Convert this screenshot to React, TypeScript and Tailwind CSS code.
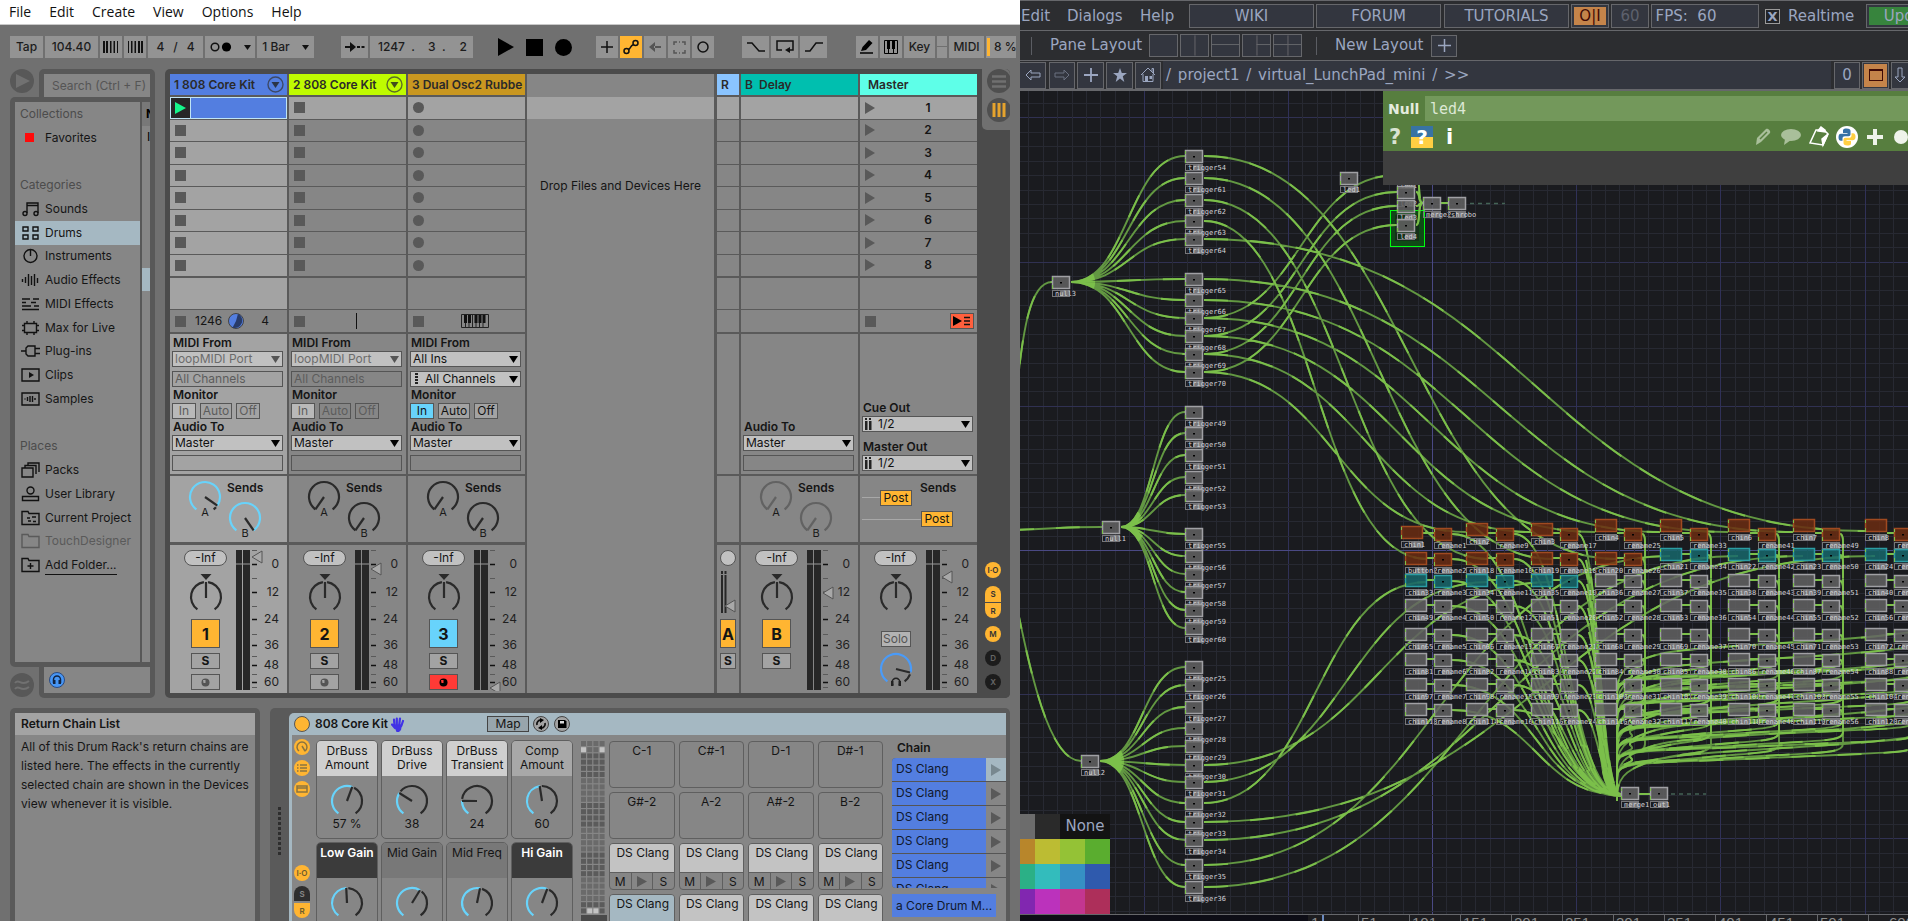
import React from "react";
import type { ReactNode } from "react";

/* ------------------------------------------------------------------ */
/* Shared drawing helpers                                              */
/* ------------------------------------------------------------------ */

const polar = (cx: number, cy: number, r: number, deg: number) => {
  const a = (deg * Math.PI) / 180;
  return [cx + r * Math.sin(a), cy - r * Math.cos(a)];
};

const arc = (cx: number, cy: number, r: number, from: number, to: number) => {
  const [x1, y1] = polar(cx, cy, r, from);
  const [x2, y2] = polar(cx, cy, r, to);
  return `M${x1} ${y1}A${r} ${r} 0 ${to - from > 180 ? 1 : 0} 1 ${x2} ${y2}`;
};

type KnobProps = {
  value: number;
  letter?: string;
  track?: string;
  fill?: string;
  needle?: string;
};

function Knob({ value, letter, track = "#2a2a2a", fill = "#68d3fb", needle = "#2a2a2a" }: KnobProps) {
  const angle = -145 + value * 290;
  const [nx, ny] = polar(18, 18, 15, angle);
  return (
    <svg width="36" height="40" viewBox="0 0 36 40" className="shrink-0">
      {value < 1 && <path d={arc(18, 18, 15, angle + (value > 0 ? 8 : 0), 145)} fill="none" stroke={track} strokeWidth="2.200" />}
      {value > 0 && <path d={arc(18, 18, 15, -145, angle)} fill="none" stroke={fill} strokeWidth="2.200" />}
      <path d={`M18 18L${nx} ${ny}`} stroke={needle} strokeWidth="2.200" />
      {letter && (
        <text x="18" y="37" textAnchor="middle" fontSize="11" fill="#1a1a1a">
          {letter}
        </text>
      )}
    </svg>
  );
}

function PanKnob() {
  return (
    <svg width="36" height="42" viewBox="0 0 36 42">
      <path d="M12.500 2h11l-5.500 6z" fill="#2a2a2a" />
      <path d={arc(18, 25, 15, -145, -8)} fill="none" stroke="#2a2a2a" strokeWidth="2.200" />
      <path d={arc(18, 25, 15, 8, 145)} fill="none" stroke="#2a2a2a" strokeWidth="2.200" />
      <path d="M18 10V26" stroke="#2a2a2a" strokeWidth="2.200" />
    </svg>
  );
}

/* ------------------------------------------------------------------ */
/* Live: menu and transport                                            */
/* ------------------------------------------------------------------ */

const toolBtn =
  "flex h-[22px] shrink-0 items-center justify-center whitespace-nowrap text-[12px] font-medium text-[#1c1c1c]";

function Tool({ label, className, children, on }: { label?: string; className: string; children: ReactNode; on?: boolean }) {
  return (
    <button type="button" aria-label={label} className={`${toolBtn} ${on ? "bg-[#ffb532]" : "bg-[#939393]"} ${className}`}>
      {children}
    </button>
  );
}

function Bars({ flip }: { flip?: boolean }) {
  return (
    <svg width="16" height="12" viewBox="0 0 16 12" className={flip ? "rotate-180" : ""}>
      <path d="M0 0h2v12H0zM3 0h2v12H3zM7 0h1.500v12H7zM10.500 0h1.500v12h-1.500zM14 0h1v12h-1z" fill="#111" />
    </svg>
  );
}

function Keys() {
  return (
    <svg width="14" height="14" viewBox="0 0 14 14">
      <path d="M.5.5h13v13H.5z" fill="#939393" stroke="#000" />
      <path d="M3 1h3v8H3zM8 1h3v8H8z" fill="#000" />
      <path d="M4.500 9v5M9.500 9v5" stroke="#000" />
    </svg>
  );
}

function MenuBar() {
  return (
    <nav className="flex h-[25px] shrink-0 items-center gap-[18px] border-b border-[#c9c9c9] bg-white pl-[9px] font-['Open_Sans',sans-serif] text-[14px] leading-[24px] text-[#111]">
      {["File", "Edit", "Create", "View", "Options", "Help"].map((m) => (
        <button key={m} type="button">
          {m}
        </button>
      ))}
    </nav>
  );
}

function Transport() {
  return (
    <div className="flex h-[44px] shrink-0 items-start overflow-hidden pt-[11px] pl-[10px]">
      <Tool className="w-[33px]">Tap</Tool>
      <Tool className="ml-[2px] w-[53px]">104.40</Tool>
      <Tool label="Nudge down" className="ml-[2px] w-[22px]">
        <Bars />
      </Tool>
      <Tool label="Nudge up" className="ml-[2px] w-[22px]">
        <Bars flip />
      </Tool>
      <Tool className="ml-[2px] w-[55px] gap-[9px]">
        <span>4</span>
        <span>/</span>
        <span>4</span>
      </Tool>
      <Tool label="Metronome" className="ml-[2px] w-[50px] gap-[12px]">
        <svg width="22" height="12" viewBox="0 0 22 12">
          <circle cx="5" cy="6" r="3.800" fill="none" stroke="#111" strokeWidth="1.500" />
          <circle cx="16.500" cy="6" r="4.600" fill="#000" />
        </svg>
        <svg width="7" height="5" viewBox="0 0 7 5">
          <path d="M0 0h7L3.500 5z" fill="#111" />
        </svg>
      </Tool>
      <Tool label="Quantization" className="ml-[2px] w-[57px] gap-[12px]">
        1 Bar
        <svg width="7" height="5" viewBox="0 0 7 5">
          <path d="M0 0h7L3.500 5z" fill="#111" />
        </svg>
      </Tool>
      <Tool label="Follow" className="ml-[27px] w-[27px]">
        <svg width="20" height="10" viewBox="0 0 20 10">
          <path d="M0 5h7" stroke="#111" strokeWidth="2" />
          <path d="M5 0l6 5-6 5z" fill="#111" />
          <path d="M12 5h3M16.500 5h3" stroke="#111" strokeWidth="2" />
        </svg>
      </Tool>
      <Tool className="ml-[2px] w-[103px] pr-[6px] pl-[8px]">
        <span className="flex-1 text-left whitespace-pre">1247  .</span>
        <span className="pr-[14px] whitespace-pre">3  .</span>
        <span>2</span>
      </Tool>
      <div className="ml-[24px] flex h-[22px] shrink-0 items-center gap-[12px]">
        <button type="button" aria-label="Play">
          <svg width="17" height="18" viewBox="0 0 17 18">
            <path d="M1 0l16 9-16 9z" />
          </svg>
        </button>
        <button type="button" aria-label="Stop" className="size-[17px] bg-black" />
        <button type="button" aria-label="Record" className="size-[17px] rounded-full bg-black" />
      </div>
      <Tool label="Overdub" className="ml-[24px] w-[22px]">
        <svg width="12" height="12" viewBox="0 0 12 12">
          <path d="M6 0v12M0 6h12" stroke="#111" strokeWidth="1.500" />
        </svg>
      </Tool>
      <Tool label="Automation arm" on className="ml-[2px] w-[22px]">
        <svg width="16" height="16" viewBox="0 0 16 16" fill="none" stroke="#111" strokeWidth="1.500">
          <circle cx="3.500" cy="12" r="2.500" />
          <circle cx="12.500" cy="4" r="2.500" />
          <path d="M5.500 10.500C8 9 7 7 10.500 5.500" />
        </svg>
      </Tool>
      <Tool label="Re-enable automation" className="ml-[2px] w-[22px]">
        <svg width="12" height="10" viewBox="0 0 12 10">
          <path d="M6 0L0 5l6 5zM5 4h7v2H5z" fill="#555" />
        </svg>
      </Tool>
      <Tool label="Capture" className="ml-[2px] w-[22px]">
        <svg width="13" height="13" viewBox="0 0 13 13" fill="none" stroke="#555" strokeWidth="1.500">
          <path d="M1 4V1h3M9 1h3v3M12 9v3H9M4 12H1V9M6 1h1M6 12h1" />
        </svg>
      </Tool>
      <Tool label="Session record" className="ml-[2px] w-[22px]">
        <svg width="12" height="12" viewBox="0 0 12 12">
          <circle cx="6" cy="6" r="5" fill="none" stroke="#111" strokeWidth="1.500" />
        </svg>
      </Tool>
      <Tool label="Punch in" className="ml-[28px] w-[27px]">
        <svg width="18" height="10" viewBox="0 0 18 10" fill="none" stroke="#111" strokeWidth="1.500">
          <path d="M0 1h5l7 8h6" />
        </svg>
      </Tool>
      <Tool label="Loop" className="ml-[2px] w-[27px]">
        <svg width="18" height="14" viewBox="0 0 18 14" fill="none" stroke="#111" strokeWidth="1.500">
          <path d="M6 10H1V1h16v9h-5" />
          <path d="M14 7l-5 3 5 3z" fill="#111" stroke="none" />
        </svg>
      </Tool>
      <Tool label="Punch out" className="ml-[2px] w-[27px]">
        <svg width="18" height="10" viewBox="0 0 18 10" fill="none" stroke="#111" strokeWidth="1.500">
          <path d="M0 9h5l6-8h7" />
        </svg>
      </Tool>
      <Tool label="Draw mode" className="ml-[29px] w-[22px]">
        <svg width="14" height="14" viewBox="0 0 14 14">
          <path d="M1 11l1.500-4L9 0l3.500 3L6 10z" fill="#000" />
          <path d="M0 13h13" stroke="#000" strokeWidth="1.500" />
        </svg>
      </Tool>
      <Tool label="Computer keyboard" className="ml-[2px] w-[22px]">
        <Keys />
      </Tool>
      <Tool className="ml-[2px] w-[31px]">Key</Tool>
      <div className="ml-[2px] flex w-[10px] shrink-0 flex-col gap-px">
        <span className="h-[10px] bg-[#939393]" />
        <span className="h-[11px] bg-[#939393]" />
      </div>
      <Tool className="ml-[2px] w-[35px]">MIDI</Tool>
      <div className="mr-[4px] ml-[2px] flex h-[22px] min-w-0 flex-1 items-center gap-[4px] overflow-hidden bg-[#939393] pl-px text-[12px] font-medium whitespace-nowrap text-[#1c1c1c]">
        <span className="h-[18px] w-[3px] shrink-0 bg-[#ffb532]" />8 %
      </div>
    </div>
  );
}

/* ------------------------------------------------------------------ */
/* Live: browser                                                       */
/* ------------------------------------------------------------------ */

const sideIcons: Record<string, ReactNode> = {
  Sounds: (
    <>
      <path d="M6 12V2h11v10M6 4.500h11" />
      <circle cx="4" cy="12.500" r="2" />
      <circle cx="15" cy="12.500" r="2" />
    </>
  ),
  Drums: <path d="M2 2h5v4H2zM12 2h5v4h-5zM2 10h5v4H2zM12 10h5v4h-5z" />,
  Instruments: (
    <>
      <circle cx="9.500" cy="8" r="6.500" />
      <path d="M9.500 2v6" />
    </>
  ),
  "Audio Effects": <path d="M1.500 7v3M4.500 5v6M7.500 2v12M10.500 4v9M13.500 2v12M16.500 6v5" />,
  "MIDI Effects": <path d="M1 3h8M12 3h6M1 6.500h4M10 6.500h5M1 10h9M13 10h5M1 13.500h17" />,
  "Max for Live": <path d="M3.500 3.500h12v9h-12zM6 1v2M13 1v2M6 13v2M13 13v2M1 5.500h2M16 5.500h2M1 10.500h2M16 10.500h2" />,
  "Plug-ins": <path d="M0 8h5M7 3h7v10H7L5 11V5zM14 5.500h5M14 10.500h5" />,
  Clips: (
    <>
      <path d="M1 2h17v12H1z" />
      <path d="M8 5l5 3-5 3z" fill="#111" stroke="none" />
    </>
  ),
  Samples: <path d="M1 2h17v12H1zM4 7.500v1M6.500 6v4M9 5v6M11.500 5v6M14 7v2" />,
  Packs: <path d="M1 6h11v9H1zM4 6V3.500h11V12M7 3.500V1h11v9" />,
  "User Library": (
    <>
      <circle cx="9.500" cy="4.500" r="3.500" />
      <path d="M1.500 10.500h16v4h-16z" />
    </>
  ),
  "Current Project": <path d="M1 14.500v-13h6l1 2h10v11zM6 8h3M11 7h4M7 11h3M12 11.500h3" />,
  TouchDesigner: <path d="M1 14.500v-13h6l1 2h10v11z" stroke="#5a5a5a" />,
  "Add Folder...": <path d="M1 14.500v-13h6l1 2h10v11zM9.500 6v6M6.500 9h6" />,
};

function SideHeading({ children }: { children: ReactNode }) {
  return <div className="flex items-center pl-[5px] text-[#4c4c4c]">{children}</div>;
}

function SideItem({ name, selected, muted, underline }: { name: string; selected?: boolean; muted?: boolean; underline?: boolean }) {
  return (
    <button
      type="button"
      className={`flex items-center gap-[5px] pl-[6px] text-left whitespace-nowrap ${selected ? "bg-[#a5b8c2]" : ""} ${muted ? "text-[#5a5a5a]" : "text-[#151515]"}`}
    >
      <svg width="19" height="16" viewBox="0 0 19 16" fill="none" stroke="#111" strokeWidth="1.400" className="shrink-0">
        {sideIcons[name]}
      </svg>
      <span className={underline ? "border-b border-[#111]" : ""}>{name}</span>
    </button>
  );
}

function Browser() {
  return (
    <aside className="flex w-[145px] shrink-0 flex-col text-[12px]">
      <div className="flex h-[28px] shrink-0">
        <button type="button" aria-label="Preview" className="size-[24px] shrink-0 rounded-full bg-[#585858]">
          <svg width="24" height="24" viewBox="0 0 24 24">
            <path d="M6 5l14 7-14 7z" fill="#717171" />
          </svg>
        </button>
        <div className="ml-[5px] flex flex-1 rounded-t-[5px] bg-[#585858] pt-[5px] pr-[5px] pl-[5px]">
          <input
            aria-label="Search"
            placeholder="Search (Ctrl + F)"
            className="h-full w-full bg-[#868686] pl-[8px] text-[12px] outline-none placeholder:text-[#555]"
          />
        </div>
      </div>
      <div className="flex min-h-0 flex-1 gap-[2px] rounded-tl-[5px] rounded-bl-[5px] bg-[#585858] py-[5px] pr-[5px] pl-[5px]">
        <div className="w-[125px] shrink-0 bg-[#868686]">
          <div className="grid h-[475px] grid-rows-[repeat(20,1fr)]">
            <SideHeading>Collections</SideHeading>
            <button type="button" className="flex items-center gap-[11px] pl-[10px] text-[#151515]">
              <span className="size-[9px] bg-[#ff0a0a]" />
              Favorites
            </button>
            <span />
            <SideHeading>Categories</SideHeading>
            <SideItem name="Sounds" />
            <SideItem name="Drums" selected />
            <SideItem name="Instruments" />
            <SideItem name="Audio Effects" />
            <SideItem name="MIDI Effects" />
            <SideItem name="Max for Live" />
            <SideItem name="Plug-ins" />
            <SideItem name="Clips" />
            <SideItem name="Samples" />
            <span />
            <SideHeading>Places</SideHeading>
            <SideItem name="Packs" />
            <SideItem name="User Library" />
            <SideItem name="Current Project" />
            <SideItem name="TouchDesigner" muted />
            <SideItem name="Add Folder..." underline />
          </div>
        </div>
        <div className="flex flex-1 flex-col overflow-hidden bg-[#868686]">
          <div className="h-[24px] bg-[#787878] pl-[4px] leading-[24px] font-bold">N</div>
          <div className="h-[20px] pl-[5px] leading-[22px]">I</div>
          <div className="mt-[122px] h-[23px] bg-[#a5b8c2]" />
        </div>
      </div>
      <div className="flex h-[31px] shrink-0 items-start">
        <svg width="24" height="24" viewBox="0 0 24 24" className="mt-[6px] shrink-0">
          <circle cx="12" cy="12" r="12" fill="#585858" />
          <path d="M5 10c4-5 6 4 14-2M5 16c4-5 6 4 14-2" fill="none" stroke="#717171" strokeWidth="2" />
        </svg>
        <div className="ml-[5px] h-full flex-1 rounded-b-[5px] bg-[#585858] px-[5px] pb-[5px]">
          <div className="flex h-full items-center bg-[#868686] pl-[5px]">
            <svg width="16" height="16" viewBox="0 0 16 16">
              <circle cx="8" cy="8" r="7.500" fill="#4796f5" stroke="#2a4a80" />
              <path d="M4.500 11V7.500a3.500 3.500 0 017 0V11" fill="none" stroke="#12233f" strokeWidth="1.500" />
              <path d="M4 8h2.500v4H4zM9.500 8H12v4H9.500z" fill="#12233f" />
            </svg>
          </div>
        </div>
      </div>
    </aside>
  );
}

/* ------------------------------------------------------------------ */
/* Live: session and mixer                                             */
/* ------------------------------------------------------------------ */

const cellBg = (lit?: boolean) => (lit ? "bg-[#a3a3a3]" : "bg-[#868686]");

function Dropdown({ label, value, icon, disabled }: { label: string; value: string; icon?: ReactNode; disabled?: boolean }) {
  return (
    <div className="relative flex h-[16px] items-center border border-[#555] bg-[#c1c1c1]">
      {icon}
      <select
        aria-label={label}
        disabled={disabled}
        className={`h-full w-full appearance-none bg-transparent pl-[2px] text-[12px] leading-[14px] outline-none ${disabled ? "text-[#6c6c6c] opacity-100" : "text-[#111]"}`}
      >
        <option>{value}</option>
      </select>
      <svg width="9" height="7" viewBox="0 0 9 7" className="pointer-events-none absolute right-[2px]">
        <path d="M0 0h9L4.500 7z" fill={disabled ? "#555" : "#000"} />
      </svg>
    </div>
  );
}

function SlotBox({ text }: { text?: string }) {
  return <div className="h-[16px] border border-[#555] pl-[2px] leading-[14px] text-[#5c5c5c]">{text}</div>;
}

const ioLabel = "h-[16px] pl-px text-[12px] leading-[16px] font-semibold text-[#151515]";

function Monitor({ active }: { active?: boolean }) {
  const base = `h-[16px] border border-[#555] leading-[14px] ${active ? "text-[#111]" : "text-[#5c5c5c]"}`;
  return (
    <div className="flex gap-[4px]">
      <button type="button" className={`${base} w-[24px] ${active ? "bg-[#68d3fb]" : "bg-[#b9b9b9]"}`}>
        In
      </button>
      <button type="button" className={`${base} w-[32px] ${active ? "bg-[#a3a3a3]" : ""}`}>
        Auto
      </button>
      <button type="button" className={`${base} w-[24px] ${active ? "bg-[#a3a3a3]" : ""}`}>
        Off
      </button>
    </div>
  );
}

const DottedIcon = (
  <svg width="5" height="12" viewBox="0 0 5 12" className="ml-[3px] mr-[4px] shrink-0">
    <path d="M1 0h3v2H1zM1 3h3v2H1zM1 6h3v2H1zM1 9h3v2H1z" fill="#222" />
  </svg>
);

const StereoIcon = (
  <svg width="8" height="12" viewBox="0 0 8 12" className="ml-[2px] mr-[3px] shrink-0">
    <path d="M0 0h2v2H0zM4 0h2v2H4zM0 3h2.500v9H0zM4 3h2.500v9H4z" fill="#222" />
  </svg>
);

const scale: [number, string][] = [
  [19, "0"],
  [47, "12"],
  [74, "24"],
  [100, "36"],
  [120, "48"],
  [137, "60"],
];

function Meter({ fader }: { fader: number }) {
  return (
    <svg width="46" height="146" viewBox="0 0 46 146" className="shrink-0">
      <path d="M0 5h6v140H0zM7 5h7v140H7z" fill="#272727" />
      <path d="M0 19h14" stroke="#9a9a9a" />
      {scale.map(([y, label]) => (
        <g key={label}>
          <path d={`M16 ${y + 0.5}h5`} stroke="#111" strokeWidth="1.500" />
          <text x="43" y={y + 4} textAnchor="end" fontSize="12" fill="#1f1f1f">
            {label}
          </text>
        </g>
      ))}
      {[5, 33, 61, 89, 111, 129, 142].map((y) => (
        <path key={y} d={`M16 ${y + 0.5}h5`} stroke="#5a5a5a" />
      ))}
      <path d={`M16 ${fader}l10-6v12z`} fill="#a8a8a8" stroke="#555" />
    </svg>
  );
}

type StripProps = {
  lit?: boolean;
  name: string;
  color: string;
  fader: number;
  recording?: boolean;
  record?: boolean;
};

function Strip({ lit, name, color, fader, record, recording }: StripProps) {
  return (
    <div className={`flex h-[148px] overflow-hidden ${cellBg(lit)}`}>
      <div className="flex w-[66px] shrink-0 flex-col items-center pt-[5px] pl-[5px]">
        <div className="h-[16px] w-[43px] rounded-full border border-[#555] bg-[#c1c1c1] text-center leading-[14px]">-Inf</div>
        <div className="mt-[6px] h-[42px]">
          <PanKnob />
        </div>
        <button type="button" className={`mt-[5px] h-[29px] w-[29px] border border-[#555] text-[16px] leading-[26px] font-bold ${color}`}>
          {name}
        </button>
        <button type="button" className="mt-[5px] h-[16px] w-[29px] border border-[#555] bg-[#a3a3a3] leading-[14px] font-bold">
          S
        </button>
        {record && (
          <button
            type="button"
            aria-label={`Arm track ${name}`}
            className={`mt-[5px] flex h-[16px] w-[29px] items-center justify-center border border-[#555] ${recording ? "bg-[#ff3a36]" : "bg-[#a3a3a3]"}`}
          >
            <svg width="9" height="9" viewBox="0 0 9 9">
              <circle cx="4.500" cy="4.500" r="4" fill={recording ? "#000" : "#555"} />
              <path d="M2 2h2.500v3L2.500 5z" fill={recording ? "#ff3a36" : "#a3a3a3"} />
            </svg>
          </button>
        )}
      </div>
      <Meter fader={fader} />
    </div>
  );
}

function Sends({ lit, values = [0, 0], dim }: { lit?: boolean; values?: [number, number]; dim?: boolean }) {
  const stroke = dim ? "#626262" : "#2a2a2a";
  return (
    <div className={`flex h-[66px] gap-[4px] pl-[17px] ${cellBg(lit)}`}>
      <div className="pt-[3px]">
        <Knob value={values[0]} letter="A" track={stroke} needle={lit ? "#2a2a2a" : stroke} />
      </div>
      <div>
        <div className="h-[24px] pt-[4px] leading-[16px] font-semibold">Sends</div>
        <Knob value={values[1]} letter="B" track={stroke} needle={lit ? "#2a2a2a" : stroke} />
      </div>
    </div>
  );
}

function SlotRows({ kind, lit, playing }: { kind: "square" | "circle" | "none" | "scene"; lit?: boolean; playing?: boolean }) {
  return (
    <div className="grid h-[179px] shrink-0 grid-rows-[repeat(8,1fr)] gap-px">
      {Array.from({ length: 8 }, (_, i) => {
        if (playing && i === 0) {
          return (
            <div key={i} className="flex border border-[#bfe4f5] bg-[#537ee0]">
              <button type="button" aria-label="Launch clip" className="flex w-[20px] items-center justify-center border-r border-[#bfe4f5] bg-[#272727]">
                <svg width="11" height="12" viewBox="0 0 11 12">
                  <path d="M0 0l11 6-11 6z" fill="#16f78c" />
                </svg>
              </button>
            </div>
          );
        }
        return (
          <div key={i} className={`flex items-center pl-[5px] ${cellBg(lit || i === 0)}`}>
            {kind === "square" && <span className="size-[11px] bg-[#595959]" />}
            {kind === "circle" && <span className="size-[11px] rounded-full bg-[#595959]" />}
            {kind === "scene" && (
              <>
                <svg width="10" height="12" viewBox="0 0 10 12">
                  <path d="M0 0l10 6-10 6z" fill="#595959" />
                </svg>
                <span className="flex-1 pl-[4px] text-center text-[12px] font-semibold">{i + 1}</span>
              </>
            )}
          </div>
        );
      })}
    </div>
  );
}

type ColumnProps = {
  head: ReactNode;
  headColor: string;
  lit?: boolean;
  width: string;
  slots: "square" | "circle" | "none" | "scene";
  playing?: boolean;
  status?: ReactNode;
  io?: ReactNode;
  sends: ReactNode;
  strip: ReactNode;
};

function Column({ head, headColor, lit, width, slots, playing, status, io, sends, strip }: ColumnProps) {
  return (
    <section className={`flex shrink-0 flex-col ${width}`}>
      <div className={`flex h-[21px] shrink-0 items-center overflow-hidden pl-[4px] font-semibold whitespace-nowrap text-[#2a2a2a] ${headColor}`}>{head}</div>
      <div className="mt-[2px]">
        <SlotRows kind={slots} lit={lit} playing={playing} />
      </div>
      <div className={`mt-[2px] h-[31px] ${cellBg(lit)}`} />
      <div className="mt-px flex h-[22px] items-center bg-[#868686] pl-[5px]">{status}</div>
      <div className={`mt-[2px] h-[140px] px-[2px] pt-px ${cellBg(lit)}`}>{io}</div>
      <div className="mt-[2px]">{sends}</div>
      <div className="mt-[3px]">{strip}</div>
    </section>
  );
}

function TrackIO({ active }: { active?: boolean }) {
  return (
    <div className="flex flex-col pr-[2px]">
      <div className={ioLabel}>MIDI From</div>
      <Dropdown label="MIDI From" value={active ? "All Ins" : "loopMIDI Port"} disabled={!active} />
      <div className="mt-[4px]">
        {active ? <Dropdown label="MIDI Channel" value="All Channels" icon={DottedIcon} /> : <SlotBox text="All Channels" />}
      </div>
      <div className={ioLabel}>Monitor</div>
      <Monitor active={active} />
      <div className={ioLabel}>Audio To</div>
      <Dropdown label="Audio To" value="Master" />
      <div className="mt-[4px]">
        <SlotBox />
      </div>
    </div>
  );
}

function FoldIcon() {
  return (
    <svg width="17" height="17" viewBox="0 0 17 17" className="mr-[3px] ml-auto">
      <circle cx="8.500" cy="8.500" r="7.500" fill="none" stroke="#333" strokeOpacity=".7" strokeWidth="1.400" />
      <path d="M4.500 6h8l-4 6z" fill="#222" fillOpacity=".8" />
    </svg>
  );
}

const StatusSquare = <span className="size-[11px] shrink-0 bg-[#595959]" />;

function ReturnA() {
  return (
    <div className="flex h-[148px] flex-col items-center bg-[#868686] pt-[5px]">
      <div className="h-[16px] w-[16px] rounded-full border border-[#555] bg-[#c1c1c1]" />
      <svg width="16" height="42" viewBox="0 0 16 42" className="mt-[5px]">
        <path d="M1 0h2v3H1zM4.500 0h2v3h-2zM1 4h2v38H1zM4.500 4h2v38h-2z" fill="#272727" />
        <path d="M5 35l10-6v12z" fill="#a8a8a8" stroke="#555" />
      </svg>
      <button type="button" className="mt-[6px] h-[29px] w-[16px] border border-[#555] bg-[#ffb532] text-[16px] leading-[26px] font-bold">
        A
      </button>
      <button type="button" className="mt-[5px] h-[16px] w-[16px] border border-[#555] bg-[#a3a3a3] leading-[14px] font-bold">
        S
      </button>
    </div>
  );
}

function MasterStrip() {
  return (
    <div className="flex h-[148px] overflow-hidden bg-[#868686]">
      <div className="flex w-[66px] shrink-0 flex-col items-center pt-[5px] pl-[5px]">
        <div className="h-[16px] w-[43px] rounded-full border border-[#555] bg-[#c1c1c1] text-center leading-[14px]">-Inf</div>
        <div className="mt-[6px] h-[42px]">
          <PanKnob />
        </div>
        <button type="button" className="mt-[17px] h-[16px] w-[30px] border border-[#555] bg-[#b3b3b3] leading-[14px] text-[#555]">
          Solo
        </button>
        <svg width="36" height="40" viewBox="0 0 36 40" className="mt-[3px]">
          <path d={arc(18, 19, 15, 111, 145)} fill="none" stroke="#2a2a2a" strokeWidth="2.200" />
          <path d={arc(18, 19, 15, -145, 103)} fill="none" stroke="#4a9bf8" strokeWidth="2.200" />
          <path d="M18 19l14 3.500" stroke="#2a2a2a" strokeWidth="2.200" />
          <path d="M15 35a4 4 0 116 0" fill="none" stroke="#222" strokeWidth="1.500" />
          <path d="M13 31h2.500v5H13zM20.500 31H23v5h-2.500z" fill="#222" />
        </svg>
      </div>
      <Meter fader={32} />
    </div>
  );
}

function ViewToggle({ children, className }: { children: ReactNode; className: string }) {
  return (
    <button type="button" className={`flex w-[16px] items-center justify-center text-[8px] font-semibold ${className}`}>
      {children}
    </button>
  );
}

function Session() {
  return (
    <main className="ml-[10px] flex min-w-0 flex-1 overflow-hidden rounded-[5px] bg-[#4b4b4b] pl-[5px] text-[12px] text-[#151515]">
      <div className="my-[5px] flex min-w-0 flex-1 gap-[2px] bg-[#5a5a5a]">
        <Column
          head={
            <>
              1 808 Core Kit
              <FoldIcon />
            </>
          }
          headColor="bg-[#537ee0]"
          lit
          width="w-[117px]"
          slots="square"
          playing
          status={
            <>
              {StatusSquare}
              <span className="ml-[9px]">1246</span>
              <svg width="16" height="16" viewBox="0 0 16 16" className="ml-[6px]">
                <circle cx="8" cy="8" r="7.500" fill="#537ee0" stroke="#444" />
                <path d="M10 .8A7.500 7.500 0 014.500 14.700L8 8z" fill="#283b69" />
              </svg>
              <span className="ml-[17px]">4</span>
            </>
          }
          io={<TrackIO />}
          sends={<Sends lit values={[0.93, 1]} />}
          strip={<Strip lit name="1" color="bg-[#ffb532]" fader={12} record />}
        />
        <Column
          head={
            <>
              2 808 Core Kit
              <FoldIcon />
            </>
          }
          headColor="bg-[#bffb00]"
          width="w-[117px]"
          slots="square"
          status={
            <>
              {StatusSquare}
              <span className="ml-[51px] h-[16px] w-px bg-[#111]" />
            </>
          }
          io={<TrackIO />}
          sends={<Sends />}
          strip={<Strip name="2" color="bg-[#ffb532]" fader={24} record />}
        />
        <Column
          head="3 Dual Osc2 Rubbe"
          headColor="bg-[#c99720]"
          width="w-[117px]"
          slots="circle"
          status={
            <>
              {StatusSquare}
              <svg width="28" height="14" viewBox="0 0 28 14" className="ml-[37px]">
                <path d="M.5.5h27v13H.5z" fill="none" stroke="#222" />
                <path d="M4.500 9v4M8 9v4M11.500 1v12M15 9v4M18.500 9v4M22 9v4" stroke="#222" />
                <path d="M3 1h3v8H3zM7 1h3v8H7zM13.500 1h3v8h-3zM17.500 1h3v8h-3zM21.500 1h3v8h-3z" fill="#111" />
              </svg>
            </>
          }
          io={<TrackIO active />}
          sends={<Sends />}
          strip={<Strip name="3" color="bg-[#68d3fb]" fader={143} record recording />}
        />
        <section className="flex min-w-0 flex-1 flex-col bg-[#868686]">
          <div className="mt-[23px] h-[22px] bg-[#a3a3a3]" />
          <p className="mt-[58px] text-center whitespace-nowrap">Drop Files and Devices Here</p>
        </section>
        <div className="ml-px flex shrink-0 gap-[2px]">
          <Column head="R" headColor="bg-[#8ac4ff]" width="w-[22px]" slots="none" sends={<div className="h-[66px] bg-[#868686]" />} strip={<ReturnA />} />
          <Column
            head={<span className="whitespace-pre">B  Delay</span>}
            headColor="bg-[#00bfaf]"
            width="w-[117px]"
            slots="none"
            io={
              <div className="flex h-full flex-col justify-end pr-[2px] pb-[3px]">
                <div className={ioLabel}>Audio To</div>
                <Dropdown label="Audio To" value="Master" />
                <div className="mt-[4px]">
                  <SlotBox />
                </div>
              </div>
            }
            sends={<Sends dim />}
            strip={<Strip name="B" color="bg-[#ffb532]" fader={48} />}
          />
          <Column
            head={<span className="pl-[4px]">Master</span>}
            headColor="bg-[#5effe8]"
            width="w-[117px]"
            slots="scene"
            status={
              <>
                {StatusSquare}
                <button type="button" aria-label="Back to arrangement" className="mr-[3px] ml-auto flex h-[16px] w-[24px] items-center justify-center border border-[#555] bg-[#ff5f3d]">
                  <svg width="18" height="10" viewBox="0 0 18 10">
                    <path d="M0 0l9 5-9 5z" />
                    <path d="M11 1.500h6M11 5h6M11 8.500h6" stroke="#111" strokeWidth="1.500" />
                  </svg>
                </button>
              </>
            }
            io={
              <div className="flex h-full flex-col justify-end pr-[2px] pb-[3px]">
                <div className={ioLabel}>Cue Out</div>
                <Dropdown label="Cue Out" value="1/2" icon={StereoIcon} />
                <div className={`mt-[7px] ${ioLabel}`}>Master Out</div>
                <Dropdown label="Master Out" value="1/2" icon={StereoIcon} />
              </div>
            }
            sends={
              <div className="flex h-[66px] flex-col bg-[#868686] pt-[4px] pl-[2px]">
                <div className="flex items-start">
                  <span className="mt-[17px] h-px w-[18px] bg-[#a8a8a8]" />
                  <button type="button" className="mt-[10px] h-[16px] w-[32px] border border-[#555] bg-[#ffb532] leading-[14px]">
                    Post
                  </button>
                  <span className="ml-[8px] leading-[16px] font-semibold">Sends</span>
                </div>
                <div className="mt-[5px] flex items-center">
                  <span className="h-px w-[59px] bg-[#a8a8a8]" />
                  <button type="button" className="h-[16px] w-[32px] border border-[#555] bg-[#ffb532] leading-[14px]">
                    Post
                  </button>
                </div>
              </div>
            }
            strip={<MasterStrip />}
          />
        </div>
      </div>
      <div className="flex w-[33px] shrink-0 flex-col bg-[#4b4b4b]">
        <div className="ml-[5px] flex h-[61px] shrink-0 flex-col items-center gap-[5px] rounded-bl-[5px] bg-[#707070]">
          <button type="button" aria-label="Arrangement view" className="pl-[5px]">
            <svg width="24" height="24" viewBox="0 0 24 24">
              <circle cx="12" cy="12" r="12" fill="#4f4f4f" />
              <path d="M5 7.500h14M5 12.500h14M5 17.500h14" stroke="#707070" strokeWidth="2.500" />
            </svg>
          </button>
          <button type="button" aria-label="Session view" className="pl-[5px]">
            <svg width="24" height="24" viewBox="0 0 24 24">
              <circle cx="12" cy="12" r="12" fill="#4f4f4f" />
              <path d="M7 5v14M12 5v14M17 5v14" stroke="#e5a32d" strokeWidth="3" />
            </svg>
          </button>
        </div>
        <div className="mt-auto mb-[8px] flex flex-col items-start pl-[8px] text-[#333]">
          <ViewToggle className="h-[16px] rounded-full bg-[#ffb532]">I·O</ViewToggle>
          <ViewToggle className="mt-[8px] h-[16px] rounded-t-full bg-[#ffb532]">S</ViewToggle>
          <ViewToggle className="mt-px h-[15px] rounded-b-full bg-[#ffb532]">R</ViewToggle>
          <ViewToggle className="mt-[8px] h-[16px] rounded-full bg-[#ffb532]">M</ViewToggle>
          <ViewToggle className="mt-[8px] h-[16px] rounded-full bg-[#1c1c1c] text-[#666]">D</ViewToggle>
          <ViewToggle className="mt-[8px] h-[16px] rounded-full bg-[#1c1c1c] text-[#666]">X</ViewToggle>
        </div>
      </div>
    </main>
  );
}

/* ------------------------------------------------------------------ */
/* Live: info view and device rack                                     */
/* ------------------------------------------------------------------ */

type MacroProps = { title: string; value: number; text?: string; head: string };

function Macro({ title, value, text, head }: MacroProps) {
  return (
    <div className="flex h-[99px] w-[62px] flex-col items-center overflow-hidden rounded-[5px] border border-[#5f5f5f] bg-[#868686]">
      <div className={`h-[35px] w-full shrink-0 pt-[3px] text-center leading-[14px] ${head}`}>{title}</div>
      <div className="mt-[7px] h-[34px]">
        <Knob value={value} />
      </div>
      <span className="leading-[14px]">{text}</span>
    </div>
  );
}

function Pad({ label, filled, selected }: { label: string; filled?: boolean; selected?: boolean }) {
  return (
    <div className="flex h-[47px] min-w-0 flex-1 flex-col overflow-hidden rounded-[4px] border border-[#5f5f5f] bg-[#868686]">
      <div className={`flex-1 text-center leading-[17px] ${filled ? (selected ? "bg-[#a5b8c2] pl-[2px]" : "bg-[#c3c3c3] pl-[2px]") : ""}`}>{label}</div>
      {filled && (
        <div className="flex h-[17px] border-t border-[#5f5f5f]">
          <button type="button" className="flex-1">
            M
          </button>
          <button type="button" aria-label={`Preview ${label}`} className="flex flex-1 items-center justify-center border-x border-[#5f5f5f]">
            <svg width="10" height="11" viewBox="0 0 10 11">
              <path d="M0 0l10 5.500L0 11z" fill="#595959" />
            </svg>
          </button>
          <button type="button" className="flex-1">
            S
          </button>
        </div>
      )}
    </div>
  );
}

function ChainRow({ selected }: { selected?: boolean }) {
  return (
    <div className="flex h-[23px] shrink-0">
      <span className="flex-1 bg-[#537ee0] pl-[4px] leading-[22px] text-[#10182c]">DS Clang</span>
      <button type="button" aria-label="Preview chain" className={`flex w-[20px] items-center justify-center ${selected ? "bg-[#a5b8c2]" : "bg-[#868686]"}`}>
        <svg width="10" height="12" viewBox="0 0 10 12">
          <path d="M0 0l10 6-10 6z" fill={selected ? "#78888f" : "#595959"} />
        </svg>
      </button>
    </div>
  );
}

function PadOverview() {
  const cells: ReactNode[] = [];
  for (let r = 0; r < 28; r++) {
    for (let c = 0; c < 4; c++) {
      const bright = (r === 1 && (c === 0 || c === 3)) || (r === 27 && (c === 1 || c === 2));
      const block = Math.floor((r + 2) / 4) % 2 === 0;
      cells.push(<rect key={`${r}-${c}`} x={c * 6.2} y={r * 6.2} width="5" height="5" fill={bright ? "#c3c3c3" : block ? "#6a6a6a" : "#5b5b5b"} />);
    }
  }
  return (
    <svg width="26" height="182" viewBox="0 0 26 182" className="shrink-0">
      {cells}
      <path d="M-1 174h28v8H-1z" fill="#4a4a4a" />
    </svg>
  );
}

function InfoView() {
  return (
    <section className="w-[250px] shrink-0 rounded-t-[5px] bg-[#5a5a5a] px-[5px] pt-[5px]">
      <div className="flex h-full flex-col bg-[#868686] text-[12px] text-[#151515]">
        <h2 className="h-[22px] shrink-0 bg-[#a3a3a3] pl-[6px] leading-[22px] font-semibold">Return Chain List</h2>
        <p className="pt-[2px] pl-[6px] leading-[19px] whitespace-nowrap">
          All of this Drum Rack's return chains are
          <br />
          listed here. The effects in the currently
          <br />
          selected chain are shown in the Devices
          <br />
          view whenever it is visible.
        </p>
      </div>
    </section>
  );
}

function DeviceView() {
  return (
    <section className="ml-[10px] flex min-w-0 flex-1 rounded-t-[5px] bg-[#5a5a5a] pt-[5px] pr-[4px] text-[12px] text-[#151515]">
      <div className="flex w-[19px] shrink-0 flex-col items-center gap-[2px] pt-[94px]">
        {Array.from({ length: 10 }, (_, i) => (
          <span key={i} className="size-[3px] bg-[#2e2e2e]" />
        ))}
      </div>
      <div className="flex min-w-0 flex-1 flex-col overflow-hidden rounded-tl-[5px] bg-[#a5b8c2] pl-[3px]">
        <div className="flex h-[22px] shrink-0 items-center pl-[2px]">
          <button type="button" aria-label="Device activator" className="size-[16px] rounded-full border border-[#555] bg-[#ffb532]" />
          <h2 className="ml-[5px] font-semibold">808 Core Kit</h2>
          <svg width="14" height="15" viewBox="0 0 14 15" className="ml-[3px]">
            <path d="M3.500 9L3 2.500M5.800 8V1.500M8.200 8l.8-6.500M10.300 9l1.700-5M4 11L1 7.500" stroke="#4133e6" strokeWidth="2.200" strokeLinecap="round" />
            <path d="M2.500 7.500h8.500l-1 5.500-2 2H5.500z" fill="#4133e6" />
          </svg>
          <button type="button" className="ml-[82px] h-[16px] w-[42px] border border-[#444] bg-[#98a5ac] leading-[14px]">
            Map
          </button>
          <svg width="16" height="16" viewBox="0 0 16 16" className="ml-[4px]">
            <circle cx="8" cy="8" r="7.500" fill="#a3a3a3" stroke="#444" />
            <path d="M4 9a4 4 0 014-5M12 7a4 4 0 01-4 5" fill="none" stroke="#111" strokeWidth="1.800" />
            <path d="M7 2l4 2-4 3zM9 9v5l-4-2z" />
          </svg>
          <svg width="16" height="16" viewBox="0 0 16 16" className="ml-[5px]">
            <circle cx="8" cy="8" r="7.500" fill="#a3a3a3" stroke="#444" />
            <path d="M4 4h7l1.500 1.500V12H4z" />
            <path d="M6 5h4v2.500H6z" fill="#ddd" />
          </svg>
        </div>
        <div className="flex min-h-0 flex-1 bg-[#868686]">
          <div className="flex w-[22px] shrink-0 flex-col pt-[4px] pl-[2px]">
            <svg width="16" height="58" viewBox="0 0 16 58">
              <circle cx="8" cy="8" r="8" fill="#ffb532" />
              <circle cx="8" cy="29" r="8" fill="#ffb532" />
              <circle cx="8" cy="50" r="8" fill="#ffb532" />
              <g stroke="#8a7440" strokeWidth="1.500" fill="none">
                <path d="M5 12a5 5 0 116 0M8 7l3 5" />
                <path d="M3 26h1.500M6 26h7M3 29h1.500M6 29h7M3 32h1.500M6 32h7" />
                <path d="M3 47h10v6H3zM3 49h10" />
              </g>
            </svg>
            <ViewToggle className="mt-[68px] h-[16px] rounded-full bg-[#ffb532] text-[#6b5a2c]">I·O</ViewToggle>
            <ViewToggle className="mt-[5px] h-[15px] rounded-t-full bg-[#2e2e2e] text-[#888]">S</ViewToggle>
            <ViewToggle className="mt-[2px] h-[15px] rounded-b-full bg-[#ffb532] text-[#6b5a2c]">R</ViewToggle>
          </div>
          <div className="grid shrink-0 grid-cols-4 content-start gap-x-[3px] gap-y-[3px] pt-[5px] pl-[2px]">
            <Macro title="DrBuss Amount" value={0.57} text="57 %" head="bg-[#cfcfcf]" />
            <Macro title="DrBuss Drive" value={0.3} text="38" head="bg-[#cfcfcf]" />
            <Macro title="DrBuss Transient" value={0.19} text="24" head="bg-[#cfcfcf]" />
            <Macro title="Comp Amount" value={0.47} text="60" head="bg-[#a8a8a8]" />
            <Macro title="Low Gain" value={0.49} head="bg-[#3b3b3b] font-semibold text-white" />
            <Macro title="Mid Gain" value={0.61} head="bg-[#787878]" />
            <Macro title="Mid Freq" value={0.54} head="bg-[#787878]" />
            <Macro title="Hi Gain" value={0.57} head="bg-[#3b3b3b] font-semibold text-white" />
          </div>
          <div className="pt-[6px] pl-[8px]">
            <PadOverview />
          </div>
          <div className="ml-[2px] flex w-[274px] shrink-0 flex-col gap-[4px] pt-[6px]">
            {[
              ["C-1", "C#-1", "D-1", "D#-1"],
              ["G#-2", "A-2", "A#-2", "B-2"],
            ].map((row) => (
              <div key={row[0]} className="flex gap-[4px]">
                {row.map((p) => (
                  <Pad key={p} label={p} />
                ))}
              </div>
            ))}
            {[0, 1].map((r) => (
              <div key={r} className="flex gap-[4px]">
                {[0, 1, 2, 3].map((c) => (
                  <Pad key={c} label="DS Clang" filled selected={r === 1 && c === 0} />
                ))}
              </div>
            ))}
          </div>
          <div className="ml-[9px] flex min-w-0 flex-1 flex-col">
            <h3 className="h-[23px] shrink-0 pt-[5px] pl-[5px] leading-[16px] font-semibold">Chain</h3>
            <div className="flex h-[130px] shrink-0 flex-col gap-px overflow-hidden rounded-l-[4px] bg-[#555]">
              <ChainRow selected />
              <ChainRow />
              <ChainRow />
              <ChainRow />
              <ChainRow />
              <ChainRow />
            </div>
            <div className="mt-[6px] mr-[10px] h-[23px] shrink-0 bg-[#537ee0] pl-[4px] leading-[23px] whitespace-nowrap text-[#10182c]">a Core Drum M...</div>
          </div>
        </div>
      </div>
    </section>
  );
}

/* ------------------------------------------------------------------ */
/* TouchDesigner: bars                                                 */
/* ------------------------------------------------------------------ */

const tdBtn = "flex shrink-0 items-center justify-center border border-[#66676b] bg-[#33363f]";

function TdBars() {
  return (
    <>
      <div className="flex h-[31px] shrink-0 items-center overflow-hidden border-t border-b border-[#66676b] pt-px pl-px whitespace-nowrap">
        <button type="button" className="w-[46px] shrink-0 text-left">Edit</button>
        <button type="button" className="w-[73px] shrink-0 text-left">Dialogs</button>
        <button type="button" className="w-[49px] shrink-0 text-left">Help</button>
        <a href="#wiki" className={`${tdBtn} h-[24px] w-[125px]`}>WIKI</a>
        <a href="#forum" className={`${tdBtn} ml-[2px] h-[24px] w-[125px]`}>FORUM</a>
        <a href="#tutorials" className={`${tdBtn} ml-[3px] h-[24px] w-[125px]`}>TUTORIALS</a>
        <button type="button" className={`${tdBtn} ml-[2px] h-[24px] w-[38px] p-[2px]`}>
          <span className="h-full w-full bg-[#c4844a] leading-[18px] text-[#3f0a05]">O|I</span>
        </button>
        <span className={`${tdBtn} ml-[2px] h-[24px] w-[38px] text-[#5d616d]`}>60</span>
        <span className={`${tdBtn} ml-[2px] h-[24px] w-[108px] pr-[38px] whitespace-pre`}>FPS:  60</span>
        <label className="ml-[6px] flex shrink-0 items-center gap-[8px]">
          <span className="relative flex size-[15px] items-center justify-center">
            <input type="checkbox" defaultChecked className="size-[15px] appearance-none border border-[#9a9a9a] bg-[#222428]" />
            <span className="pointer-events-none absolute text-[13px] leading-[13px] font-bold">X</span>
          </span>
          <span className="w-[70px]">Realtime</span>
        </label>
        <button type="button" className={`${tdBtn} ml-[8px] h-[24px] w-[90px] p-[2px]`}>
          <span className="h-full w-full bg-[#37843d] leading-[18px]">Update</span>
        </button>
      </div>
      <div className="flex h-[30px] shrink-0 items-center border-b border-[#66676b] pl-[11px] whitespace-nowrap">
        <span className="h-[18px] w-px bg-[#5b5d63]" />
        <span className="ml-[18px] w-[99px]">Pane Layout</span>
        <div className="flex gap-[2px]">
          {["", "M14.500 0V21", "M0 9.500H28", "M14.500 0V21M14 9.500H28", "M14.500 0V21M0 9.500H28"].map((d, i) => (
            <button key={i} type="button" aria-label={`Pane layout ${i + 1}`} className={`${tdBtn} h-[23px] w-[29px]`}>
              <svg width="27" height="21" viewBox="0 0 28 21">
                <path d={d || "M0 0"} stroke="#66676b" />
              </svg>
            </button>
          ))}
        </div>
        <span className="ml-[14px] h-[18px] w-px bg-[#5b5d63]" />
        <span className="ml-[18px] w-[96px]">New Layout</span>
        <button type="button" aria-label="Add layout" className={`${tdBtn} h-[22px] w-[26px]`}>
          <svg width="13" height="13" viewBox="0 0 13 13">
            <path d="M6.500 0v13M0 6.500h13" stroke="#9ba6c0" strokeWidth="1.500" />
          </svg>
        </button>
      </div>
      <div className="flex h-[30px] shrink-0 items-center overflow-hidden border-b-2 border-[#66676b] whitespace-nowrap">
        <button type="button" aria-label="Back" className={`${tdBtn} h-[27px] w-[26px] border-l-0`}>
          <svg width="16" height="14" viewBox="0 0 16 14" fill="none" stroke="#9ba6c0">
            <path d="M1 7l5-5v3h9v4H6v3z" />
          </svg>
        </button>
        <button type="button" aria-label="Forward" className={`${tdBtn} ml-[3px] h-[27px] w-[26px]`}>
          <svg width="16" height="14" viewBox="0 0 16 14" fill="none" stroke="#6a7080">
            <path d="M15 7l-5-5v3H1v4h9v3z" />
          </svg>
        </button>
        <button type="button" aria-label="Add" className={`${tdBtn} ml-[2px] h-[27px] w-[27px]`}>
          <svg width="14" height="14" viewBox="0 0 14 14">
            <path d="M7 0v14M0 7h14" stroke="#9ba6c0" strokeWidth="1.800" />
          </svg>
        </button>
        <button type="button" aria-label="Bookmark" className={`${tdBtn} ml-[2px] h-[27px] w-[27px]`}>
          <svg width="14" height="14" viewBox="0 0 14 14">
            <path d="M7 0l1.800 5H14l-4.200 3.200L11.300 14 7 10.500 2.700 14l1.500-5.800L0 5h5.200z" fill="#9ba6c0" />
          </svg>
        </button>
        <button type="button" aria-label="Home" className={`${tdBtn} ml-[2px] h-[27px] w-[26px]`}>
          <svg width="16" height="16" viewBox="0 0 16 16">
            <path d="M1 8l7-7 7 7M12 5V1.500h1.500V7M3 7v7.500h10V7" fill="none" stroke="#9ba6c0" />
            <path d="M5 9h3v5H5zM9.500 9H12v3H9.500z" fill="#9ba6c0" />
          </svg>
        </button>
        <div className="ml-[2px] h-[29px] min-w-0 flex-1 overflow-hidden bg-[#33363f] pl-[3px] leading-[29px] [&>span]:mr-[2px]">
          <span>/</span> <span>project1</span> <span>/</span> <span>virtual_LunchPad_mini</span> <span>/</span> <span>&gt;&gt;</span>
        </div>
        <button type="button" className={`${tdBtn} ml-[3px] h-[27px] w-[26px]`}>0</button>
        <button type="button" aria-label="Maximize pane" className={`${tdBtn} ml-[2px] h-[27px] w-[27px] p-[1px]`}>
          <span className="flex h-full w-full items-center justify-center bg-[#c4844a]">
            <span className="h-[12px] w-[14px] border border-t-2 border-[#3f0a05]" />
          </span>
        </button>
        <button type="button" aria-label="Download" className={`${tdBtn} ml-[2px] h-[27px] w-[17px] overflow-hidden border-r-0`}>
          <svg width="12" height="16" viewBox="0 0 12 16" fill="none" stroke="#9ba6c0">
            <path d="M6 15L1 10h3V1h4v9h3z" />
          </svg>
        </button>
      </div>
    </>
  );
}

/* ------------------------------------------------------------------ */
/* TouchDesigner: network                                              */
/* ------------------------------------------------------------------ */

const ORIGIN_X = 1020;
const ORIGIN_Y = 91;

const wire = (x1: number, y1: number, x2: number, y2: number, k = 0.5) => {
  const d = Math.max(4, Math.abs(x2 - x1) * k);
  return `M${x1} ${y1}C${x1 + d} ${y1} ${x2 - d} ${y2} ${x2} ${y2}`;
};

const triggers: Record<number, number> = {
  54: 156, 61: 178, 62: 200, 63: 221, 64: 239, 65: 279, 66: 300, 67: 318, 68: 336, 69: 354, 70: 372,
  49: 412, 50: 433, 51: 455, 52: 477, 53: 495, 55: 534, 56: 556, 57: 574, 58: 592, 59: 610, 60: 628,
  25: 667, 26: 685, 27: 707, 28: 728, 29: 746, 30: 765, 31: 782, 32: 803, 33: 822, 34: 840, 35: 865, 36: 887,
};

const chinX = [1405, 1466, 1531, 1595, 1660, 1728, 1793, 1865];
const renameX = [1434, 1496, 1560, 1624, 1690, 1758, 1822, 1894];
const rowY = [525, 558, 580, 605, 634, 659, 684, 709];
const rowBase = [0, 17, 33, 49, 65, 81, 97, 113];

type NodeSpec = { x: number; y: number; w: number; label: string; labelY: number; tone: "gray" | "orange" | "teal"; dot: boolean };

const nodes: NodeSpec[] = [];
const wires: string[] = [];

const addOp = (x: number, y: number, label: string) => nodes.push({ x, y, w: 18, label, labelY: y + 11, tone: "gray", dot: true });

addOp(1052, 282, "null3");
addOp(1102, 527, "null1");
addOp(1081, 761, "null2");
wires.push("M1015 410C1022 330 1030 282 1052 282");
wires.push("M1010 530C1050 529 1060 527 1102 527");
wires.push("M1008 560C1030 680 1050 761 1081 761");

Object.entries(triggers).forEach(([n, y]) => {
  addOp(1185, y, `trigger${n}`);
  if (y < 380) wires.push(wire(1071, 282, 1185, y));
  else if (y < 640) wires.push(wire(1121, 527, 1185, y));
  else wires.push(wire(1100, 761, 1185, y));
});

addOp(1340, 178, "led1");
addOp(1397, 174, "led1");
addOp(1397, 192, "led2");
addOp(1397, 206, "led3");
addOp(1397, 225, "led4");
addOp(1423, 203, "merge2");
addOp(1448, 203, "shrobo");
addOp(1621, 793, "merge1");
addOp(1650, 793, "out1");
wires.push("M1441 203H1448", "M1639 794H1650");
[175, 192, 206, 225].forEach((y, i) => {
  wires.push(wire(1204, triggers[67 + i], 1397, y));
  wires.push(`M1416 ${y}C1421 ${y} 1417 203 1423 203`);
});

/* Upper fans into the button grid */
[70, 69, 68, 67, 66, 65, 64].forEach((n, i) => wires.push(wire(1204, triggers[n], chinX[i + 1], i === 6 ? 531 : 532)));
[63, 62, 61, 54].forEach((n, i) => wires.push(wire(1204, triggers[n], chinX[i] + 22, 559)));
/* Lower fans */
[32, 31, 30].forEach((n, i) => wires.push(wire(1204, triggers[n], chinX[i] + 22, 582)));
[35, 36, 34, 33].forEach((n, i) => wires.push(wire(1204, triggers[n], chinX[i + 4] + 10, 556)));

for (let r = 0; r < 8; r++) {
  for (let c = 0; c < 8; c++) {
    let y = rowY[r];
    let x = chinX[c];
    let ry = y + 1;
    let labelY = y + 12;
    let rLabelY = y + 12;
    if (r === 0) {
      y = c === 0 ? 532 : c < 3 ? 529 : 525;
      x = c === 0 ? 1401 : x;
      ry = 534;
      labelY = y + 12;
      rLabelY = 545;
    }
    if (r === 1 && c > 3) {
      y = 554;
      ry = 555;
      labelY = 566;
      rLabelY = 566;
    }
    const tone = r === 0 || (r === 1 && c < 4) ? "orange" : r === 1 || (r === 2 && c < 3) ? "teal" : "gray";
    const label = r === 1 && c === 0 ? "button2" : r === 0 ? `chin${c + 1}` : `chin${rowBase[r] + c}`;
    nodes.push({ x, y, w: 22, label, labelY, tone, dot: false });
    nodes.push({ x: renameX[c], y: ry, w: 18, label: `rename${c * 8 + r + 1}`, labelY: rLabelY, tone, dot: true });
    wires.push(`M${x + 22} ${ry - 1}H${renameX[c]}`);

    const sx = renameX[c] + 18;
    if (c < 3) {
      const reach = 1621 - sx;
      wires.push(`M${sx} ${ry}C${sx + reach * 0.5} ${ry} ${1621 - reach * 0.5} 795 1621 ${794 + (r % 3)}`);
    } else {
      const vx = sx + 3;
      const yb = 664 + r * 12;
      const mid = (vx + 1617) / 2;
      wires.push(`M${sx} ${ry}Q${vx} ${ry} ${vx} ${ry + 8}V${yb - 4}C${vx} ${yb + 6} ${vx - 20} ${yb + 4} ${mid} ${yb + 10}S1617 ${yb + 12} 1617 ${yb + 30}V794H1621`);
    }
  }
}

/* Wires arriving from operators beyond the right edge */
for (let r = 0; r < 8; r++) {
  const y = 636 + r * 15;
  wires.push(`M1930 ${y - 8}C1880 ${y + 6} 1700 ${y + 8} 1660 ${y + 18}S1617 ${y + 40} 1617 ${y + 60}V794`);
}
/* Dense strands between the third column and the merge */
for (let i = 0; i < 6; i++) {
  wires.push(`M${1586 + i} ${560 + i * 24}C${1600 + i} ${620 + i * 20} 1592 795 1621 795`);
}

const toneFill = { gray: "#626262", orange: "#6a2c12", teal: "#17666a" };
const toneEdge = { gray: "#a0a0a4", orange: "#a04a20", teal: "#2b9da3" };

function OpNode({ x, y, w, label, labelY, tone, dot }: NodeSpec) {
  return (
    <g>
      <rect x={x + 0.5} y={y - 5.5} width={w - 1} height="12" fill={toneFill[tone]} fillOpacity=".86" stroke={toneEdge[tone]} strokeWidth="1.500" />
      <path d={`M${x + 0.5} ${y - 5}v3M${x + 0.5} ${y + 3}v4`} stroke="#7cc34a" />
      {dot && <rect x={x + w / 2 - 1} y={y} width="2" height="1.500" fill="#000" />}
      <rect x={x + 0.5} y={labelY - 2.500} width={w - 1} height="6" fill="none" stroke="#77777a" />
      <rect x={x + w * 0.45} y={labelY - 2.500} width={w * 0.5} height="6" fill="#77777a" />
      <text x={x + 3} y={labelY + 3} fontSize="7" fill="#d2d2d6">
        {label}
      </text>
    </g>
  );
}

const gridSteps = Array.from({ length: 80 }, (_, i) => i - 40);

function Network() {
  const all = wires.join("");
  return (
    <svg width="100%" height="100%" className="block font-['DejaVu_Sans_Mono',monospace]">
      <g transform={`translate(${-ORIGIN_X} ${-ORIGIN_Y})`}>
        {gridSteps.map((i) => (
          <g key={i}>
            <path d={`M${Math.round(1432 + i * 14.42) + 0.5} 80V1400`} stroke={i === 0 ? "#4a4984" : i % 10 === 0 ? "#303158" : "#272932"} />
            <path d={`M1000 ${Math.round(550 + i * 14.42) + 0.5}H2600`} stroke={i === 0 ? "#4a4984" : i % 10 === 0 ? "#303152" : "#272932"} />
          </g>
        ))}
        <rect x="1390.500" y="210.500" width="34" height="36" fill="#0f4a16" stroke="#00ff10" />
        <rect x="1395" y="215" width="24" height="26" fill="#15301a" />
        <path d={all} fill="none" stroke="#629742" strokeWidth="1.900" />
        <path d={all} fill="none" stroke="#7bbf4a" strokeWidth="1.900" strokeDasharray="24 22" />
        <path d="M1470 203.500H1505M1671 794H1706" stroke="#446356" strokeWidth="1.500" strokeDasharray="4 4" />
        {nodes.map((n, i) => (
          <OpNode key={i} {...n} />
        ))}
      </g>
    </svg>
  );
}

function PythonMark({ size }: { size: number }) {
  return (
    <svg width={size} height={size} viewBox="0 0 22 22">
      <circle cx="11" cy="11" r="11" fill="#fff" />
      <path d="M10.500 2.500c-3.500 0-3.500 1.500-3.500 2.500v2h4.500v.8H5C3 7.800 2.500 9.500 2.500 11.200S3 14.800 5 14.800h1.500V12.500c0-1.500 1-2.300 2.500-2.300h3.500c1.300 0 2-.8 2-2V5c0-1.500-1-2.500-4-2.500z" fill="#3671a5" />
      <path d="M11.500 19.500c3.500 0 3.500-1.500 3.500-2.500v-2h-4.500v-.8H17c2 0 2.500-1.700 2.500-3.400S19 7.200 17 7.200h-1.500v2.300c0 1.500-1 2.300-2.500 2.300H9.500c-1.300 0-2 .8-2 2V17c0 1.500 1 2.500 4 2.500z" fill="#ffcf43" />
    </svg>
  );
}

function ParameterPanel() {
  return (
    <div className="absolute top-0 right-0 left-[363px]">
      <div className="bg-[#577e3f] pt-[5px] text-white">
        <div className="flex h-[25px]">
          <span className="w-[42px] shrink-0 pl-[5px] text-[14px] leading-[26px] font-bold text-[#e4ecdf]">Null</span>
          <input
            aria-label="Operator name"
            defaultValue="led4"
            className="min-w-0 flex-1 bg-[#73985b] pt-px pl-[5px] font-['DejaVu_Sans_Mono',monospace] text-[15px] text-[#dde8d5] outline-none"
          />
        </div>
        <div className="flex h-[30px] items-center overflow-hidden pt-px">
          <button type="button" className="ml-[5px] w-[14px] text-[21px] leading-[26px] font-bold text-[#d9e3d2]">?</button>
          <button type="button" aria-label="Python help" className="ml-[9px] flex h-[22px] w-[22px] shrink-0 justify-center bg-[linear-gradient(#3873a3_50%,#ffcf43_50%)]">
            <span className="text-[20px] leading-[22px] font-bold">?</span>
          </button>
          <button type="button" className="ml-[13px] text-[21px] leading-[26px] font-bold">i</button>
          <div className="ml-auto flex shrink-0 items-center gap-[6px]">
            <svg width="20" height="20" viewBox="0 0 20 20">
              <path d="M2 18l1-7 9-9c2-1 5 2 4 4l-9 9z" fill="#a9bf9a" />
              <path d="M6 12l7-7" stroke="#577e3f" strokeWidth="1.500" />
            </svg>
            <svg width="22" height="18" viewBox="0 0 22 18">
              <ellipse cx="11" cy="7" rx="10" ry="6" fill="#a9bf9a" />
              <path d="M5 11l-1 6 7-5z" fill="#a9bf9a" />
            </svg>
            <svg width="22" height="22" viewBox="0 0 22 22" fill="none" stroke="#fff" strokeWidth="1.500">
              <path d="M8 4h8l4 4-5 11-13-2z" />
              <path d="M10 5l3-4 4 3v2z" fill="#fff" />
              <path d="M20 8l-5 11-1-6z" fill="#fff" />
            </svg>
            <PythonMark size={22} />
            <svg width="18" height="18" viewBox="0 0 18 18" className="ml-[2px]">
              <path d="M9 1v16M1 9h16" stroke="#eef3ea" strokeWidth="4" />
            </svg>
            <span className="ml-[4px] size-[14px] rounded-full bg-[#eef3ea]" />
          </div>
        </div>
      </div>
      <div className="h-[34px] bg-[#3f3f3f]" />
    </div>
  );
}

function Palette() {
  return (
    <div className="absolute bottom-0 left-0 grid w-[90px] grid-cols-[15px_25px_25px_25px] grid-rows-[repeat(4,25px)]">
      <span className="bg-[#6c6c6c]" />
      <span className="bg-[#2a2a2a]" />
      <span className="col-span-2 bg-[#131313] text-center leading-[25px]">None</span>
      <span className="bg-[#b8862b]" />
      <span className="bg-[#bcbc33]" />
      <span className="bg-[#94c236]" />
      <span className="bg-[#5aad2f]" />
      <span className="bg-[#2bb086]" />
      <span className="bg-[#33bcbc]" />
      <span className="bg-[#3690c4]" />
      <span className="bg-[#2f5aad]" />
      <span className="bg-[#8127b0]" />
      <span className="bg-[#bb32bc]" />
      <span className="bg-[#c33690]" />
      <span className="bg-[#ad2f5a]" />
    </div>
  );
}

function Timeline() {
  return (
    <div className="flex h-[7px] shrink-0 overflow-hidden border-t border-[#66676b] bg-[#1d1d20]">
      <div className="w-[288px] shrink-0 bg-[#0d0d16]" />
      <div className="flex w-[50px] shrink-0 pl-[3px] font-['Liberation_Sans',sans-serif] text-[15px] leading-[15px] text-[#8d8d8d]">
        1<span className="ml-[3px] h-[15px] w-[2px] bg-[#6c8bc0]" />
      </div>
      <div className="grid flex-1 auto-cols-[51px] grid-flow-col font-['Liberation_Sans',sans-serif] text-[15px] leading-[15px] text-[#8d8d8d]">
        {[51, 101, 151, 201, 251, 301, 351, 401, 451, 501, 551].map((n) => (
          <span key={n} className="h-[15px] border-l border-[#66676b] pl-[2px]">
            {n === 551 ? <span className="pl-[18px]">600</span> : n}
          </span>
        ))}
      </div>
    </div>
  );
}

export default function App() {
  return (
    <div className="flex h-screen w-full overflow-hidden bg-[#18191d]">
      <div className="flex w-[53.46%] shrink-0 flex-col overflow-hidden bg-[#707070] font-['Inter',sans-serif]">
        <MenuBar />
        <Transport />
        <div className="flex h-[629px] shrink-0 px-[10px]">
          <Browser />
          <Session />
        </div>
        <div className="mt-[10px] flex min-h-0 flex-1 px-[10px]">
          <InfoView />
          <DeviceView />
        </div>
      </div>
      <div className="flex min-w-0 flex-1 flex-col overflow-hidden bg-[#2c2d30] font-['DejaVu_Sans',sans-serif] text-[15px] text-[#9ba6c0]">
        <TdBars />
        <div className="relative min-h-0 flex-1 overflow-hidden bg-[#1a1b1f]">
          <Network />
          <ParameterPanel />
          <Palette />
        </div>
        <Timeline />
      </div>
    </div>
  );
}
